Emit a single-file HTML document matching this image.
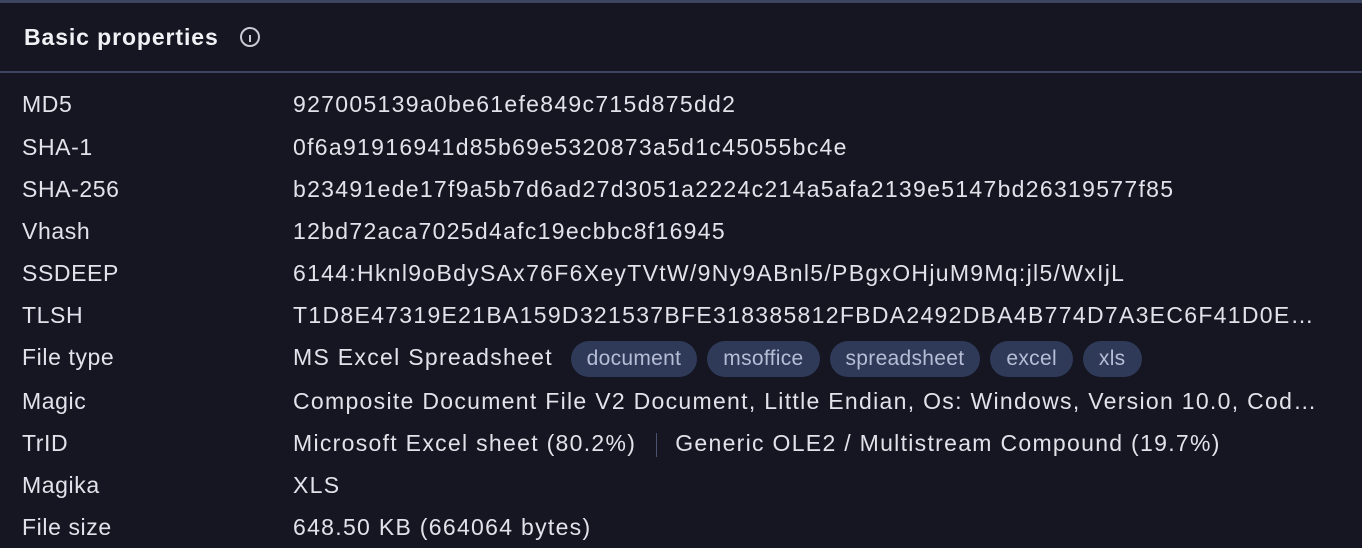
<!DOCTYPE html>
<html><head><meta charset="utf-8"><style>
html,body{margin:0;padding:0;}
body{width:1362px;height:546px;overflow:hidden;background:#161622;font-family:"Liberation Sans",sans-serif;color:#e2e3ea;position:relative;}
.top{position:absolute;left:0;top:0;width:1362px;height:3px;background:#3c4560;}
.hd{position:absolute;left:24px;top:23px;font-size:23px;font-weight:bold;color:#f0f0f5;letter-spacing:0.9px;line-height:28px;}
.info{position:absolute;left:240px;top:27px;width:20px;height:20px;border:2px solid #c8c9d2;border-radius:50%;box-sizing:border-box;}
.info:after{content:"";position:absolute;left:7px;top:6px;width:2px;height:7px;background:#c8c9d2;}
.div{position:absolute;left:0;top:71px;width:1362px;height:2px;background:#3c4560;}
.row{position:absolute;left:0;height:42px;line-height:42px;font-size:23px;white-space:nowrap;letter-spacing:1.3px;}
.l{position:absolute;left:22px;letter-spacing:0.6px;}
.v{position:absolute;left:293px;width:1025px;overflow:hidden;text-overflow:ellipsis;}
.p{display:inline-block;height:36px;line-height:36px;padding:0 16px;border-radius:18px;background:#2e3a58;color:#b6bed6;margin-left:10px;vertical-align:middle;font-size:21px;letter-spacing:0.3px;}
.sep{display:inline-block;width:1px;height:24px;background:#4a5270;vertical-align:middle;margin:0 18px 0 20px;}
</style></head><body>
<div class="top"></div>
<div class="hd">Basic properties</div><div class="info"></div>
<div class="div"></div>
<div class="row" style="top:83px"><span class="l">MD5</span><span class="v">927005139a0be61efe849c715d875dd2</span></div>
<div class="row" style="top:126px"><span class="l">SHA-1</span><span class="v">0f6a91916941d85b69e5320873a5d1c45055bc4e</span></div>
<div class="row" style="top:168px"><span class="l">SHA-256</span><span class="v">b23491ede17f9a5b7d6ad27d3051a2224c214a5afa2139e5147bd26319577f85</span></div>
<div class="row" style="top:210px"><span class="l">Vhash</span><span class="v">12bd72aca7025d4afc19ecbbc8f16945</span></div>
<div class="row" style="top:252px"><span class="l">SSDEEP</span><span class="v">6144:Hknl9oBdySAx76F6XeyTVtW/9Ny9ABnl5/PBgxOHjuM9Mq:jl5/WxIjL</span></div>
<div class="row" style="top:294px"><span class="l">TLSH</span><span class="v">T1D8E47319E21BA159D321537BFE318385812FBDA2492DBA4B774D7A3EC6F41D0E7432AB</span></div>
<div class="row" style="top:336px"><span class="l">File type</span><span class="v">MS Excel Spreadsheet <span class="p">document</span><span class="p">msoffice</span><span class="p">spreadsheet</span><span class="p">excel</span><span class="p">xls</span></span></div>
<div class="row" style="top:380px"><span class="l">Magic</span><span class="v">Composite Document File V2 Document, Little Endian, Os: Windows, Version 10.0, Code page: 1252</span></div>
<div class="row" style="top:422px"><span class="l">TrID</span><span class="v">Microsoft Excel sheet (80.2%)<span class="sep"></span>Generic OLE2 / Multistream Compound (19.7%)</span></div>
<div class="row" style="top:464px"><span class="l">Magika</span><span class="v">XLS</span></div>
<div class="row" style="top:506px"><span class="l">File size</span><span class="v">648.50 KB (664064 bytes)</span></div>
</body></html>
